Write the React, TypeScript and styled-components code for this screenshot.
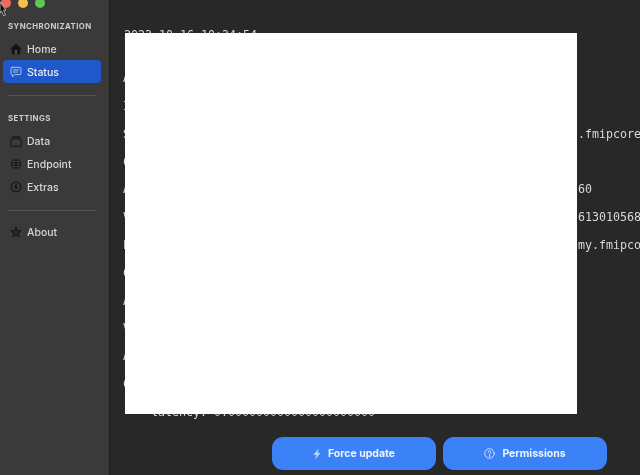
import React from 'react';
import styled, { createGlobalStyle } from 'styled-components';

const Global = createGlobalStyle`
  html, body { margin: 0; padding: 0; width: 640px; height: 475px; overflow: hidden; background: #282828; }
  * { box-sizing: border-box; }
`;
const Frame = styled.div`
  position: relative;
  display: flex;
  width: 640px;
  height: 475px;
  overflow: hidden;
  font-family: Inter, "Liberation Sans", sans-serif;
`;
const Sidebar = styled.aside`
  flex: 0 0 110px;
  display: flex;
  flex-direction: column;
  padding: 0 8px 0 3px;
  background: #3a3a3a;
  border-right: 1px solid #1e1e1e;
  filter: blur(0.35px);
`;
const Lights = styled.div`
  display: flex;
  gap: 7px;
  margin: -2px 0 12px -2px;
`;
const Light = styled.span<{ $c: string }>`
  width: 10px;
  height: 10px;
  border-radius: 50%;
  background: ${p => p.$c};
`;
const SectionLabel = styled.div`
  height: 12px;
  margin: 0 0 5px 5px;
  font-size: 7.8px;
  line-height: 12px;
  font-weight: 700;
  letter-spacing: 0.42px;
  color: #cdcdcd;
`;
const Item = styled.div<{ $active?: boolean }>`
  display: flex;
  align-items: center;
  gap: 5px;
  height: 23px;
  padding: 1px 0 0 7px;
  border-radius: 4px;
  font-size: 10.5px;
  font-weight: 500;
  color: ${p => (p.$active ? '#e8edf8' : '#d6d6d6')};
  background: ${p => (p.$active ? '#2058cc' : 'transparent')};
  svg { flex: none; width: 12px; height: 12px; }
`;
const Divider = styled.div`
  height: 1px;
  margin: 12px 5px 16px;
  background: #555;
`;
const AboutDivider = styled(Divider)`
  margin: 12px 5px 9px;
`;
const Main = styled.main`
  flex: 1;
  display: flex;
  flex-direction: column;
  min-width: 0;
  background: #282828;
`;
const Log = styled.div`
  height: 430px;
  padding: 22px 0 0 14px;
  overflow: hidden;
  font-family: "DejaVu Sans Mono", "Liberation Mono", monospace;
  font-size: 11.63px;
  line-height: 27.8px;
  color: #d8d8d8;
  white-space: pre;
  filter: blur(0.35px);
`;
const Stamp = styled.div`
  margin-bottom: 15.5px;
`;
const LogLine = styled.div`
  margin-left: -1px;
`;
const Mask = styled.div`
  position: absolute;
  left: 125px;
  top: 33px;
  width: 452px;
  height: 381px;
  background: #fff;
`;
const Actions = styled.div`
  display: flex;
  justify-content: flex-end;
  gap: 7px;
  padding: 7px 33px 0 0;
`;
const ActionButton = styled.button`
  display: flex;
  align-items: center;
  justify-content: center;
  gap: 7px;
  width: 164px;
  height: 33px;
  border: 0;
  border-radius: 11px;
  background: #3b82f6;
  color: #eef4ff;
  font: 700 10.5px Inter, "Liberation Sans", sans-serif;
  filter: blur(0.3px);
`;
const Cursor = styled.svg`
  position: absolute;
  left: 0;
  top: 0;
`;

const pad = ' '.repeat(64);
const rows = [
  'A',
  'I',
  `S${pad}.fmipcore.service`,
  'C',
  `A${pad}60`,
  `V${pad}613010568`,
  `L${pad}my.fmipcore`,
  'C',
  'A',
  'V',
  'A',
  'C',
  '    latency: 0.000000000000000000000',
];

const ink = '#141414';

const HomeIcon = () => (
  <svg viewBox="0 0 14 14">
    <path d="M7 1.2 L13.2 7 H11.6 V12.8 H2.4 V7 H0.8 Z" fill={ink} stroke={ink} strokeWidth="0.8" strokeLinejoin="round" />
    <rect x="5.6" y="8" width="2.8" height="4.8" fill="#4a4a4a" />
  </svg>
);
const StatusIcon = () => (
  <svg viewBox="0 0 14 14" fill="none" stroke="#b9cdf4" strokeWidth="1.1" strokeLinejoin="round" strokeLinecap="round">
    <path d="M2.6 1.5 H11.4 A1.4 1.4 0 0 1 12.8 2.9 V8.6 A1.4 1.4 0 0 1 11.4 10 H5.6 L3 12.6 V10 H2.6 A1.4 1.4 0 0 1 1.2 8.6 V2.9 A1.4 1.4 0 0 1 2.6 1.5 Z" />
    <path d="M4 4.5 H10 M4 7 H8.6" />
  </svg>
);
const DataIcon = () => (
  <svg viewBox="0 0 14 14" fill="none" stroke={ink} strokeWidth="1.2">
    <rect x="1" y="4.4" width="12" height="8.6" rx="1.6" />
    <path d="M2.6 4.2 V3.2 A1 1 0 0 1 3.6 2.2 H10.4 A1 1 0 0 1 11.4 3.2 V4.2" />
  </svg>
);
const GlobeIcon = () => (
  <svg viewBox="0 0 14 14" fill="none">
    <circle cx="7" cy="7" r="6.2" fill={ink} />
    <g stroke="#505050" strokeWidth="0.7">
      <path d="M0.8 7 H13.2 M1.6 4 H12.4 M1.6 10 H12.4" />
      <ellipse cx="7" cy="7" rx="2.8" ry="6.2" />
    </g>
  </svg>
);
const ExtrasIcon = () => (
  <svg viewBox="0 0 14 14" fill="none">
    <circle cx="7" cy="7" r="5.7" stroke={ink} strokeWidth="1.3" />
    <path d="M7.8 2.8 L4.4 7.6 H6.6 L6.2 11.2 L9.6 6.4 H7.4 Z" fill={ink} />
  </svg>
);
const StarIcon = () => (
  <svg viewBox="0 0 14 14">
    <path d="M7 1 L8.8 5 L13.2 5.5 L9.9 8.4 L10.8 12.8 L7 10.6 L3.2 12.8 L4.1 8.4 L0.8 5.5 L5.2 5 Z" fill="#262626" stroke={ink} strokeWidth="0.9" strokeLinejoin="round" />
  </svg>
);
const BoltIcon = () => (
  <svg width="8" height="12" viewBox="2 0 8 12">
    <path d="M7.6 0.4 L2.4 7 H5.4 L4.2 11.6 L9.6 4.8 H6.6 Z" fill="#bcd4fb" />
  </svg>
);
const HelpIcon = () => (
  <svg width="11" height="11" viewBox="0 0 12 12" fill="none" stroke="#eef4ff" strokeWidth="0.9" strokeLinecap="round">
    <circle cx="6" cy="6" r="5.2" />
    <path d="M4.5 4.7 A1.5 1.5 0 1 1 6.7 6 C6.2 6.3 6 6.6 6 7.1" />
    <circle cx="6" cy="8.8" r="0.3" />
  </svg>
);

export default function App() {
  return (
    <Frame>
      <Global />
      <Sidebar>
        <Lights>
          <Light $c="#ed6a5e" />
          <Light $c="#f4bf4f" />
          <Light $c="#61c554" />
        </Lights>
        <SectionLabel>SYNCHRONIZATION</SectionLabel>
        <Item><HomeIcon />Home</Item>
        <Item $active><StatusIcon />Status</Item>
        <Divider />
        <SectionLabel>SETTINGS</SectionLabel>
        <Item><DataIcon />Data</Item>
        <Item><GlobeIcon />Endpoint</Item>
        <Item><ExtrasIcon />Extras</Item>
        <AboutDivider />
        <Item><StarIcon />About</Item>
      </Sidebar>
      <Main>
        <Log>
          <Stamp>2023-10-16 10:34:54</Stamp>
          {rows.map((r, i) => <LogLine key={i}>{r}</LogLine>)}
        </Log>
        <Actions>
          <ActionButton><BoltIcon />Force update</ActionButton>
          <ActionButton><HelpIcon />Permissions</ActionButton>
        </Actions>
      </Main>
      <Mask />
      <Cursor width="8" height="16" viewBox="0 0 8 16">
        <path d="M0 2 L6 10 L3.5 10 L5.5 15 L3.5 15.5 L1.5 11 L0 13 Z" fill="#111" stroke="#ddd" strokeWidth="0.7" />
      </Cursor>
    </Frame>
  );
}
